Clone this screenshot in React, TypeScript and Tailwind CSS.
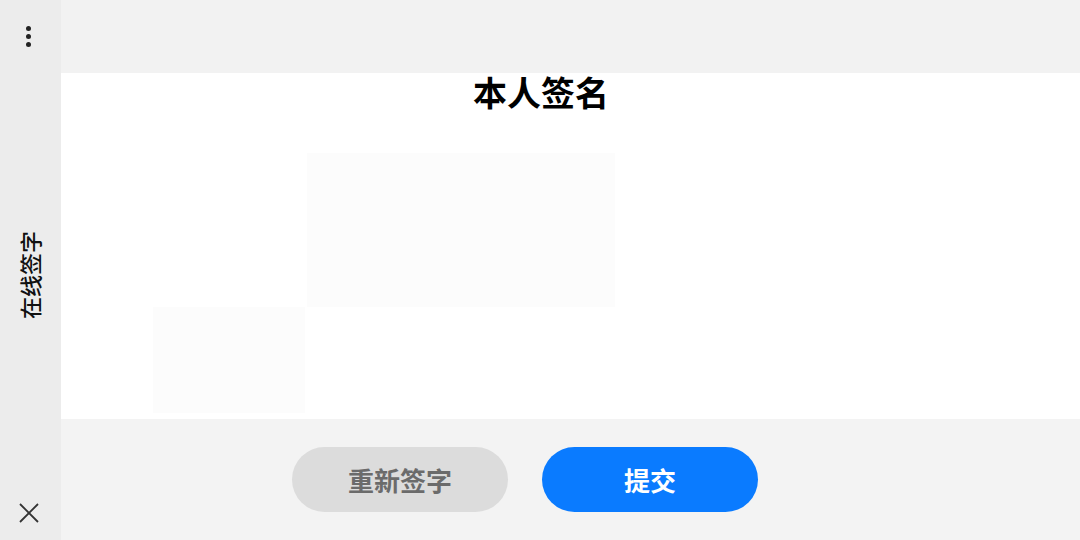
const font = { fontFamily: '"Noto Sans CJK SC", "Noto Sans", sans-serif' };

export default function App() {
  return (
    <div className="flex h-[540px] w-[1080px] overflow-hidden bg-[#f3f3f3]" style={font}>
      {/* side bar */}
      <div className="flex w-[61px] shrink-0 flex-col items-center justify-between bg-[#ececec] pb-[17px] pr-[4px] pt-[26px]">
        <div className="flex flex-col items-center gap-[3px]">
          <span className="h-[5px] w-[5px] rounded-full bg-[#222]" />
          <span className="h-[5px] w-[5px] rounded-full bg-[#222]" />
          <span className="h-[5px] w-[5px] rounded-full bg-[#222]" />
        </div>
        <div className="-rotate-90 whitespace-nowrap text-[22px] font-medium leading-none text-[#111]">在线签字</div>
        <svg width="20" height="20" viewBox="0 0 20 20" fill="none" stroke="#333" strokeWidth="1.8">
          <path d="M1 1L19 19M19 1L1 19" />
        </svg>
      </div>

      <div className="flex flex-1 flex-col">
        <div className="h-[73px] shrink-0 bg-[#f2f2f2]" />
        <div className="flex h-[346px] shrink-0 flex-col bg-white">
          <h1 className="-mt-[3px] pr-[59px] text-center text-[34px] font-bold leading-[44px] text-black">本人签名</h1>
          <div className="ml-[246px] mt-[39px] h-[154px] w-[308px] bg-[#fcfcfc]" />
          <div className="ml-[92px] h-[106px] w-[152px] bg-[#fcfcfc]" />
        </div>
        <div className="flex flex-1 items-start gap-[34px] pl-[231px] pt-[28px]">
          <button className="h-[65px] w-[216px] rounded-full bg-[#dcdcdc] text-[26px] font-bold text-[#6b6b6b]">重新签字</button>
          <button className="h-[65px] w-[216px] rounded-full bg-[#0a7bff] text-[26px] font-bold text-white">提交</button>
        </div>
      </div>
    </div>
  );
}
